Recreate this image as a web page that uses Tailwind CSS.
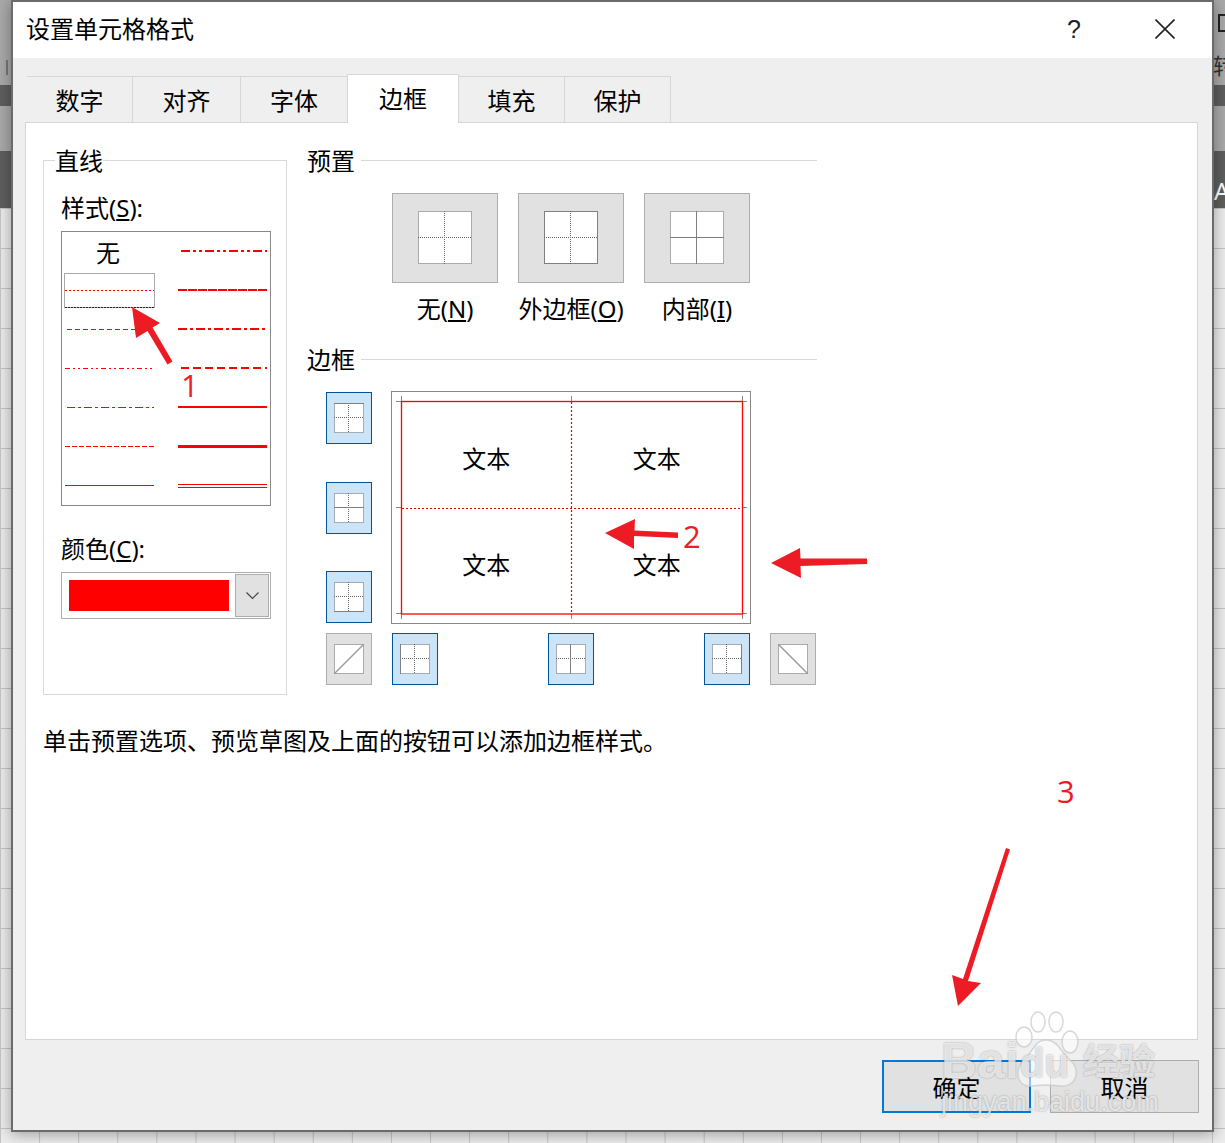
<!DOCTYPE html>
<html lang="zh-CN">

<head>
    <meta charset="UTF-8">
    <title>设置单元格格式</title>
    <script src="https://cdn.jsdelivr.net/npm/@tailwindcss/browser@4"></script>
</head>

<body class="bg-[#ededed]">
    <div class="relative w-[1225px] h-[1143px] overflow-hidden font-['Noto_Sans','Noto_Sans_CJK_SC',sans-serif] text-[24px] text-black bg-[#ececec]">

        <!-- Spreadsheet behind the dialog -->
        <div class="absolute inset-x-0 top-[208px] bottom-0 bg-[linear-gradient(#c4c4c4_1px,transparent_1px),linear-gradient(90deg,#c4c4c4_1px,transparent_1px)] bg-[size:39.1px_40px] bg-[position:0px_0px]"></div>
        <div class="absolute inset-x-0 top-0 h-[85px] bg-[#a9a9a9]"></div>
        <div class="absolute inset-x-0 top-[85px] h-[21px] bg-[#5e5e5e]"></div>
        <div class="absolute inset-x-0 top-[106px] h-[45px] bg-[#a9a9a9]"></div>
        <div class="absolute inset-x-0 top-[151px] h-[57px] bg-[#5e5e5e]"></div>
        <div class="absolute left-[6px] top-[60px] w-[2px] h-[15px] bg-[#777777]"></div>
        <div class="absolute left-[1218px] top-[14px] w-[10px] h-[18px] border-2 border-[#222222]"></div>
        <div class="absolute left-[1213px] top-[50px] text-[22px] leading-[30px] text-[#333333]">转</div>
        <div class="absolute left-[1214px] top-[176px] text-[24px] leading-[30px] text-white">A</div>

        <!-- Dialog -->
        <div class="absolute left-[11px] top-0 w-[1203px] h-[1132px] border-2 border-[#6b6b6b] bg-[#efefef] shadow-[0_2px_14px_rgba(0,0,0,0.35)]">
            <!-- Title bar -->
            <div class="flex items-center h-[56px] bg-white pl-[13px] pb-[2px]">
                <div class="leading-[54px]">设置单元格格式</div>
                <div class="ml-auto w-[14px] text-center text-[25px] leading-[54px] font-['Liberation_Sans',sans-serif] text-[#222222] mr-[74px]">?</div>
                <svg class="mr-[37px]" width="20" height="20" viewBox="0 0 20 20" fill="none" stroke="#222222" stroke-width="1.6">
                    <path d="M0.5 0.5L19.5 19.5M19.5 0.5L0.5 19.5" />
                </svg>
            </div>

            <!-- Tabs -->
            <div class="relative z-10 flex items-start h-[48px] mt-[16px] ml-[14px]">
                <div class="w-[106px] h-[46px] mt-[2px] pt-[4px] text-center leading-[40px] border-t border-r border-[#d6d6d6]">数字</div>
                <div class="w-[108px] h-[46px] mt-[2px] pt-[4px] text-center leading-[40px] border-t border-r border-[#d6d6d6]">对齐</div>
                <div class="w-[106px] h-[46px] mt-[2px] pt-[4px] text-center leading-[40px] border-t border-[#d6d6d6]">字体</div>
                <div class="w-[112px] h-[49px] pt-[4px] text-center leading-[40px] bg-white border-t border-l border-r border-[#d6d6d6]">边框</div>
                <div class="w-[106px] h-[46px] mt-[2px] pt-[4px] text-center leading-[40px] border-t border-r border-[#d6d6d6]">填充</div>
                <div class="w-[106px] h-[46px] mt-[2px] pt-[4px] text-center leading-[40px] border-t border-r border-[#d6d6d6]">保护</div>
            </div>

            <!-- Tab panel -->
            <div class="ml-[12px] w-[1173px] h-[918px] bg-white border border-[#d6d6d6] pt-[24px]">
                <div class="flex items-start h-[548px]">
                    <!-- 直线 group -->
                    <div class="relative mt-[13px] ml-[17px] w-[244px] h-[535px] border border-[#d9d9d9] pl-[17px]">
                        <div class="absolute left-[11px] top-[-14px] bg-white leading-[28px]">直线</div>
                        <div class="mt-[33px] leading-[28px]">样式(<span class="underline">S</span>):</div>
                        <div class="mt-[9px] w-[210px] h-[275px] relative border border-[#888888]">
                            <div class="absolute left-[34px] top-[5px] leading-[32px]">无</div>
                            <svg class="absolute left-[-1px] top-[-1px]" width="210" height="275" viewBox="61 231 210 275" fill="none" stroke="#ff0000">
                                <rect x="64.5" y="273.5" width="90" height="34" stroke="#555555" stroke-dasharray="1 1" />
                                <path d="M65 307.5H154" stroke="#222222" stroke-dasharray="2 1" />
                                <path d="M65 290.5H154" stroke-dasharray="2 2" />
                                <path d="M67 329.5H154" stroke-dasharray="5 3" />
                                <path d="M65 368.5H154" stroke-dasharray="5 3 2 3 2 3" />
                                <path d="M67 407.5H154" stroke-dasharray="8 3 3 3" />
                                <path d="M65 446.5H154" stroke-dasharray="5 2" />
                                <path d="M65 485.5H154" />
                                <g stroke-width="2">
                                    <path d="M181 251H267" stroke-dasharray="9 3 3 3 3 3" />
                                    <path d="M178 290H267" stroke-dasharray="9 1" />
                                    <path d="M178 329H267" stroke-dasharray="9 3 3 3" />
                                    <path d="M181 368H267" stroke-dasharray="8 4" />
                                    <path d="M178 407H267" />
                                </g>
                                <path d="M178 446.5H267" stroke-width="3" />
                                <path d="M178 484.5H267M178 487.5H267" />
                            </svg>
                        </div>
                        <div class="mt-[29px] leading-[28px]">颜色(<span class="underline">C</span>):</div>
                        <div class="mt-[9px] flex items-center w-[210px] h-[47px] border border-[#adadad] pl-[7px] pr-[1px]">
                            <div class="w-[160px] h-[31px] bg-[#ff0000]"></div>
                            <div class="ml-[6px] flex items-center justify-center w-[34px] h-[43px] bg-[#e1e1e1] border border-[#adadad]">
                                <svg width="13" height="8" viewBox="0 0 13 8" fill="none" stroke="#444444" stroke-width="1.2">
                                    <path d="M0.5 0.5L6.5 6.5L12.5 0.5" />
                                </svg>
                            </div>
                        </div>
                    </div>

                    <!-- 预置 and 边框 -->
                    <div class="ml-[20px] w-[510px]">
                        <div class="flex h-[28px] leading-[28px]">
                            <div>预置</div>
                            <div class="flex-1 ml-[6px] mt-[13px] h-px bg-[#d9d9d9]"></div>
                        </div>
                        <div class="flex gap-[20px] mt-[18px] ml-[85px]">
                            <div class="w-[106px]">
                                <div class="flex items-center justify-center h-[90px] bg-[#e1e1e1] border border-[#adadad]">
                                    <svg width="54" height="54" viewBox="0 0 54 54" fill="#ffffff" stroke="#666666">
                                        <rect x="0.5" y="0.5" width="53" height="52" stroke-dasharray="1 1" />
                                        <path d="M26.500 0V53M0 26.500H54" stroke-dasharray="1 1" />
                                    </svg>
                                </div>
                                <div class="mt-[10px] text-center leading-[32px] whitespace-nowrap">无(<span class="underline">N</span>)</div>
                            </div>
                            <div class="w-[106px]">
                                <div class="flex items-center justify-center h-[90px] bg-[#e1e1e1] border border-[#adadad]">
                                    <svg width="54" height="54" viewBox="0 0 54 54" fill="#ffffff" stroke="#666666">
                                        <rect x="0.5" y="0.5" width="53" height="52" stroke="#808080" />
                                        <path d="M26.500 0V53M0 26.500H54" stroke-dasharray="1 1" />
                                    </svg>
                                </div>
                                <div class="mt-[10px] text-center leading-[32px] whitespace-nowrap">外边框(<span class="underline">O</span>)</div>
                            </div>
                            <div class="w-[106px]">
                                <div class="flex items-center justify-center h-[90px] bg-[#e1e1e1] border border-[#adadad]">
                                    <svg width="54" height="54" viewBox="0 0 54 54" fill="#ffffff" stroke="#666666">
                                        <rect x="0.5" y="0.5" width="53" height="52" stroke-dasharray="1 1" />
                                        <path d="M26.500 0V53M0 26.500H54" stroke="#808080" />
                                    </svg>
                                </div>
                                <div class="mt-[10px] text-center leading-[32px] whitespace-nowrap">内部(<span class="underline">I</span>)</div>
                            </div>
                        </div>

                        <div class="flex h-[28px] mt-[21px] leading-[28px]">
                            <div>边框</div>
                            <div class="flex-1 ml-[6px] mt-[13px] h-px bg-[#d9d9d9]"></div>
                        </div>
                        <div class="flex items-start mt-[18px] ml-[19px]">
                            <!-- Side buttons -->
                            <div class="flex flex-col justify-between w-[46px] h-[231px]">
                                <div class="flex items-center justify-center h-[52px] bg-[#cce4f7] border border-[#005499]">
                                    <svg width="30" height="30" viewBox="0 0 30 30" fill="#ffffff" stroke="#666666">
                                        <rect x="0.5" y="0.5" width="29" height="29" stroke-dasharray="1 1" />
                                        <path d="M14.500 0V30M0 14.500H30" stroke-dasharray="1 1" />
                                        <path d="M0 0.5H30" stroke="#808080" />
                                    </svg>
                                </div>
                                <div class="flex items-center justify-center h-[52px] bg-[#cce4f7] border border-[#005499]">
                                    <svg width="30" height="30" viewBox="0 0 30 30" fill="#ffffff" stroke="#666666">
                                        <rect x="0.5" y="0.5" width="29" height="29" stroke-dasharray="1 1" />
                                        <path d="M14.500 0V30" stroke-dasharray="1 1" />
                                        <path d="M0 14.500H30" stroke="#808080" />
                                    </svg>
                                </div>
                                <div class="flex items-center justify-center h-[52px] bg-[#cce4f7] border border-[#005499]">
                                    <svg width="30" height="30" viewBox="0 0 30 30" fill="#ffffff" stroke="#666666">
                                        <rect x="0.5" y="0.5" width="29" height="29" stroke-dasharray="1 1" />
                                        <path d="M14.500 0V30M0 14.500H30" stroke-dasharray="1 1" />
                                        <path d="M0 29.5H30" stroke="#808080" />
                                    </svg>
                                </div>
                            </div>
                            <!-- Preview -->
                            <div class="relative ml-[19px] mt-[-1px] w-[360px] h-[233px] border border-[#888888]">
                                <svg class="absolute left-[-1px] top-[-1px]" width="360" height="233" viewBox="391 391 360 233" fill="none">
                                    <path d="M396 401.5H401M401.5 396V401M396 613.5H401M401.5 614V619M742 401.5H747M742.5 396V401M742 613.5H747M742.5 614V619M396 507.5H401M742 507.5H747M571.5 396V401M571.5 614V619" stroke="#888888" />
                                    <rect x="401.5" y="401.5" width="341" height="212.5" stroke="#ff0000" stroke-width="1.3" />
                                    <path d="M402 508.5H742M571.5 402V614" stroke="#e00000" stroke-width="1.2" stroke-dasharray="2 2" />
                                </svg>
                                <div class="absolute left-[9px] top-[9px] grid grid-cols-2 grid-rows-2 w-[341px] h-[213px] text-center">
                                    <div class="pt-[42px] leading-[32px]">文本</div>
                                    <div class="pt-[42px] leading-[32px]">文本</div>
                                    <div class="pt-[41px] leading-[32px]">文本</div>
                                    <div class="pt-[41px] leading-[32px]">文本</div>
                                </div>
                            </div>
                        </div>
                        <!-- Bottom buttons -->
                        <div class="flex mt-[9px] ml-[19px] w-[490px] justify-between">
                            <div class="flex items-center justify-center w-[46px] h-[52px] bg-[#e1e1e1] border border-[#adadad]">
                                <svg width="30" height="30" viewBox="0 0 30 30" fill="#ffffff" stroke="#666666">
                                    <rect x="0.5" y="0.5" width="29" height="29" stroke-dasharray="1 1" />
                                    <path d="M0 30L30 0" stroke="#999999" stroke-width="1.4" />
                                </svg>
                            </div>
                            <div class="flex items-center justify-center w-[46px] h-[52px] ml-[20px] bg-[#cce4f7] border border-[#005499]">
                                <svg width="30" height="30" viewBox="0 0 30 30" fill="#ffffff" stroke="#666666">
                                    <rect x="0.5" y="0.5" width="29" height="29" stroke-dasharray="1 1" />
                                    <path d="M14.500 0V30M0 14.500H30" stroke-dasharray="1 1" />
                                    <path d="M0.5 0V30" stroke="#808080" />
                                </svg>
                            </div>
                            <div class="flex items-center justify-center w-[46px] h-[52px] ml-[110px] bg-[#cce4f7] border border-[#005499]">
                                <svg width="30" height="30" viewBox="0 0 30 30" fill="#ffffff" stroke="#666666">
                                    <rect x="0.5" y="0.5" width="29" height="29" stroke-dasharray="1 1" />
                                    <path d="M0 14.500H30" stroke-dasharray="1 1" />
                                    <path d="M14.500 0V30" stroke="#808080" />
                                </svg>
                            </div>
                            <div class="flex items-center justify-center w-[46px] h-[52px] ml-[110px] bg-[#cce4f7] border border-[#005499]">
                                <svg width="30" height="30" viewBox="0 0 30 30" fill="#ffffff" stroke="#666666">
                                    <rect x="0.5" y="0.5" width="29" height="29" stroke-dasharray="1 1" />
                                    <path d="M14.500 0V30M0 14.500H30" stroke-dasharray="1 1" />
                                    <path d="M29.5 0V30" stroke="#808080" />
                                </svg>
                            </div>
                            <div class="flex items-center justify-center w-[46px] h-[52px] ml-[20px] bg-[#e1e1e1] border border-[#adadad]">
                                <svg width="30" height="30" viewBox="0 0 30 30" fill="#ffffff" stroke="#666666">
                                    <rect x="0.5" y="0.5" width="29" height="29" stroke-dasharray="1 1" />
                                    <path d="M0 0L30 30" stroke="#999999" stroke-width="1.4" />
                                </svg>
                            </div>
                        </div>
                    </div>
                </div>
                <div class="mt-[30px] ml-[17px] leading-[32px]">单击预置选项、预览草图及上面的按钮可以添加边框样式。</div>
            </div>

            <!-- Footer buttons -->
            <div class="flex justify-end gap-[19px] mt-[20px] pr-[13px]">
                <div class="w-[149px] h-[53px] pt-[4px] text-center leading-[44px] bg-[#e1e1e1] border-2 border-[#0078d7]">确定</div>
                <div class="w-[149px] h-[53px] pt-[5px] text-center leading-[44px] bg-[#e1e1e1] border border-[#adadad]">取消</div>
            </div>
        </div>

        <!-- Annotations drawn on top of the screenshot -->
        <svg class="absolute inset-0" width="1225" height="1143" viewBox="0 0 1225 1143" fill="#ed1c24" stroke="none">
            <path d="M132 307L160 323L152.500 327.500L172.500 361.500L167.500 364.500L147.500 331L136 338Z" />
            <path d="M605 533L635 519L634.500 530.500L678 532.500L678 538L634 536L634 549Z" />
            <path d="M771 563L800 548L800.500 558.500L867 558.500L867 564L800.500 566L801 578Z" />
            <path d="M958 1006L952 975L963 979L1006 848L1010 849.500L968 981L981 983Z" />
        </svg>
        <div class="absolute left-[181px] top-[365px] text-[31px] leading-[40px] font-['Open_Sans',sans-serif] text-[#ed1c24]">1</div>
        <div class="absolute left-[683px] top-[516px] text-[31px] leading-[40px] font-['Open_Sans',sans-serif] text-[#ed1c24]">2</div>
        <div class="absolute left-[1057px] top-[771px] text-[31px] leading-[40px] font-['Open_Sans',sans-serif] text-[#ed1c24]">3</div>

        <!-- Baidu jingyan watermark -->
        <div class="absolute left-[941px] top-[1033px] text-[50px] leading-[56px] font-bold font-['Liberation_Sans',sans-serif] text-white/70 [text-shadow:0_0_2px_rgba(100,100,100,0.6)]">Bai</div>
        <svg class="absolute left-[1010px] top-[1010px]" width="75" height="90" viewBox="0 0 75 90" fill="#ffffff" fill-opacity="0.55" stroke="#c8c8c8" stroke-opacity="0.7" stroke-width="1.5">
            <ellipse cx="14" cy="27" rx="8" ry="10" />
            <ellipse cx="28" cy="12" rx="7" ry="10" />
            <ellipse cx="46" cy="12" rx="7" ry="10" />
            <ellipse cx="60" cy="32" rx="8" ry="11" />
            <path d="M36 30C24 30 22 44 14 50C4 58 6 78 22 76C30 75 42 75 50 76C66 78 72 60 60 50C52 44 48 30 36 30Z" />
        </svg>
        <div class="absolute left-[1020px] top-[1037px] text-[40px] leading-[52px] font-bold font-['Liberation_Sans',sans-serif] text-white/70 [text-shadow:0_0_2px_rgba(100,100,100,0.6)]">du</div>
        <div class="absolute left-[1083px] top-[1040px] text-[36px] leading-[44px] font-bold text-white/70 [text-shadow:0_0_2px_rgba(100,100,100,0.6)]">经验</div>
        <div class="absolute left-[941px] top-[1086px] text-[27px] leading-[32px] font-['Liberation_Sans',sans-serif] text-white/70 [text-shadow:0_0_2px_rgba(100,100,100,0.6)]">jingyan.baidu.com</div>
    </div>
</body>

</html>
